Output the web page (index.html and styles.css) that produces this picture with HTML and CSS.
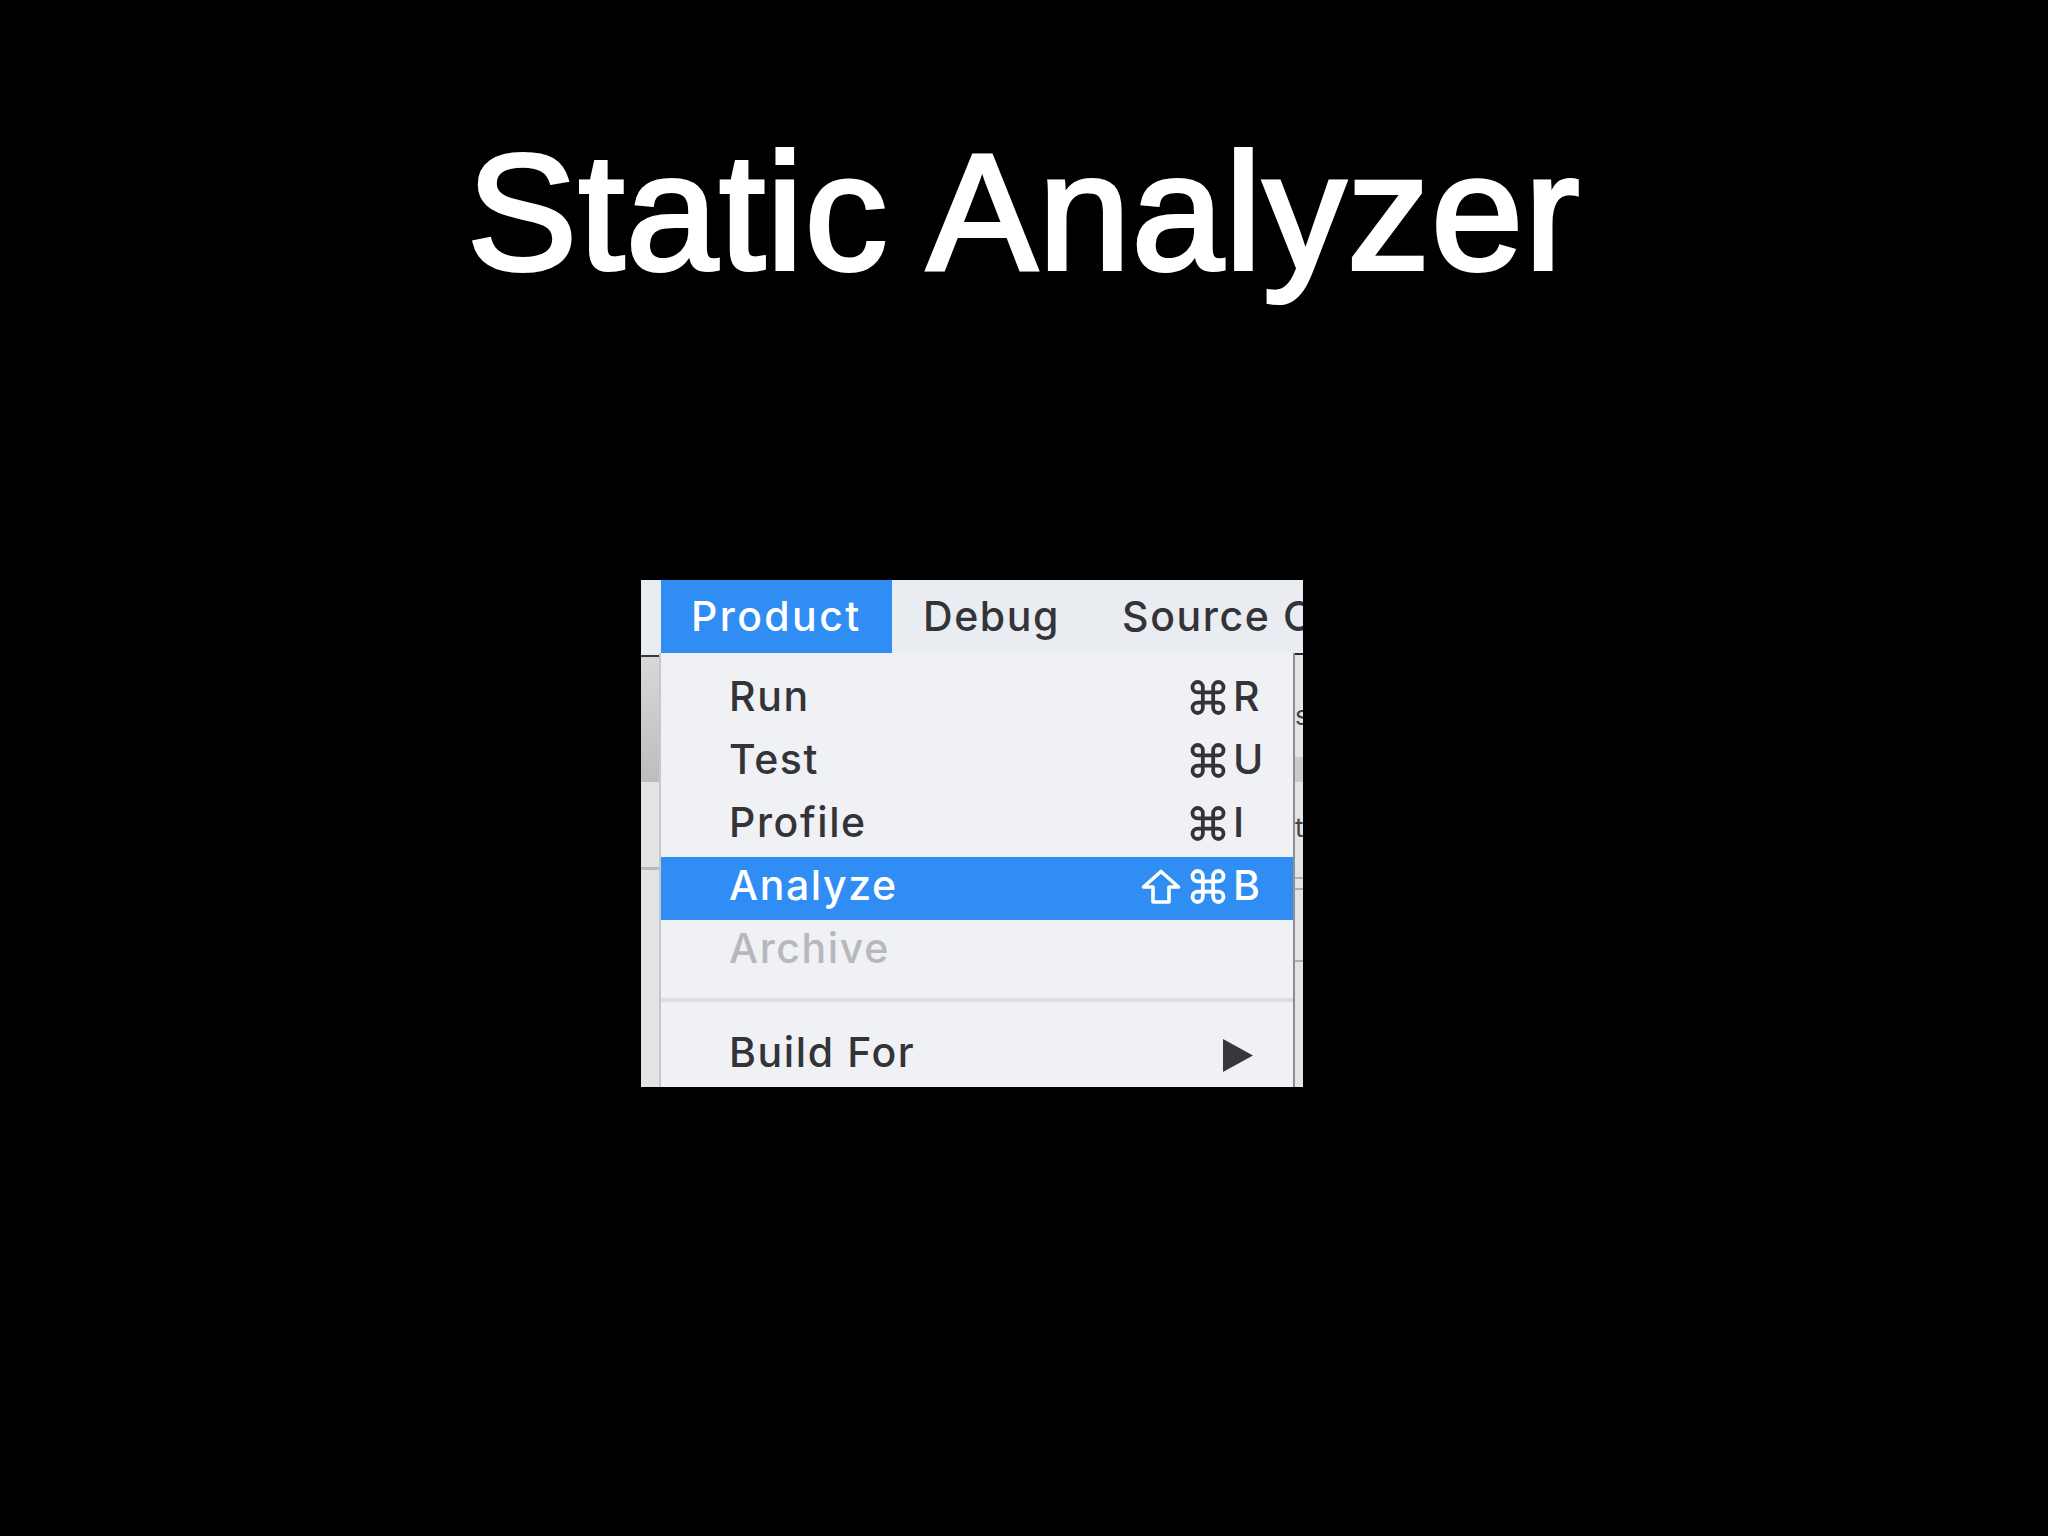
FILE: index.html
```html
<!DOCTYPE html>
<html lang="en">
<head>
<meta charset="utf-8">
<title>Static Analyzer</title>
<link rel="stylesheet" href="styles.css">
</head>
<body>
<div class="slide">
  <h1 class="title">Static Analyzer</h1>
  <div class="shot">
    <div class="menubar">
      <div class="bar-item active">Product</div>
      <div class="bar-item">Debug</div>
      <div class="bar-item">Source Control</div>
    </div>
    <div class="below">
      <div class="win-left"></div>
      <div class="dropdown">
        <div class="row">
          <span class="label">Run</span>
          <span class="mods"><svg class="cmd" viewBox="3 3 18 18"><path d="M15 6v12a3 3 0 1 0 3-3H6a3 3 0 1 0 3 3V6a3 3 0 1 0-3 3h12a3 3 0 1 0-3-3"/></svg></span>
          <span class="key">R</span>
        </div>
        <div class="row">
          <span class="label">Test</span>
          <span class="mods"><svg class="cmd" viewBox="3 3 18 18"><path d="M15 6v12a3 3 0 1 0 3-3H6a3 3 0 1 0 3 3V6a3 3 0 1 0-3 3h12a3 3 0 1 0-3-3"/></svg></span>
          <span class="key">U</span>
        </div>
        <div class="row">
          <span class="label">Profile</span>
          <span class="mods"><svg class="cmd" viewBox="3 3 18 18"><path d="M15 6v12a3 3 0 1 0 3-3H6a3 3 0 1 0 3 3V6a3 3 0 1 0-3 3h12a3 3 0 1 0-3-3"/></svg></span>
          <span class="key">I</span>
        </div>
        <div class="row selected">
          <span class="label">Analyze</span>
          <span class="mods"><svg class="shift" viewBox="0 0 40 35"><path d="M20 2.5 L37.5 18 H28 V33 H12 V18 H2.5 Z"/></svg><svg class="cmd" viewBox="3 3 18 18"><path d="M15 6v12a3 3 0 1 0 3-3H6a3 3 0 1 0 3 3V6a3 3 0 1 0-3 3h12a3 3 0 1 0-3-3"/></svg></span>
          <span class="key">B</span>
        </div>
        <div class="row disabled">
          <span class="label">Archive</span>
        </div>
        <div class="separator"></div>
        <div class="row">
          <span class="label">Build For</span>
          <svg class="submenu" viewBox="0 0 30 33"><path d="M0 0 L30 16.5 L0 33 Z"/></svg>
        </div>
      </div>
      <div class="win-right">
        <span class="frag frag-s">s</span>
        <span class="frag frag-t">t</span>
      </div>
    </div>
  </div>
</div>
</body>
</html>
```

FILE: styles.css
```css
html, body {
  margin: 0;
  padding: 0;
  background: #000;
}

.slide {
  width: 2048px;
  height: 1536px;
  background: #000;
  overflow: hidden;
}

.title {
  margin: 130px 0 0 0;
  font-family: "Liberation Sans", Arial, sans-serif;
  font-weight: 400;
  font-size: 165px;
  line-height: 165px;
  letter-spacing: 1.5px;
  color: #fff;
  text-align: center;
  -webkit-text-stroke: 4px #fff;
}

.shot {
  margin: 285px 0 0 641px;
  width: 662px;
  height: 507px;
  overflow: hidden;
  display: flex;
  flex-direction: column;
  background: #eceff2;
  font-family: Inter, "Noto Sans", sans-serif;
  font-size: 41px;
  font-weight: 500;
  letter-spacing: 1.6px;
  color: #333338;
}

.menubar {
  height: 73px;
  flex: none;
  display: flex;
  padding-left: 20px;
  background: #e9edf1;
  white-space: nowrap;
}

.bar-item {
  padding: 0 31px;
  line-height: 73px;
  flex: none;
}

.bar-item.active {
  background: #2f8df4;
  color: #fff;
  width: 231px;
  box-sizing: border-box;
  padding: 0 0 0 30px;
  letter-spacing: 2.4px;
}

.below {
  flex: 1;
  display: flex;
}

.win-left {
  width: 20px;
  flex: none;
  background:
    linear-gradient(to bottom, transparent 0, transparent 2px, #3a3a3a 2px, #3a3a3a 4px, transparent 4px),
    linear-gradient(to bottom, transparent 0, transparent 214px, #b9b9bb 214px, #b9b9bb 217px, transparent 217px),
    linear-gradient(to bottom, #e9edf1 0, #e9edf1 2px, #d8d8da 4px, #bdbdbf 129px, #e2e3e5 129px, #e2e3e5 100%);
  border-right: 2px solid #c6c7c9;
  box-sizing: border-box;
}

.dropdown {
  width: 632px;
  flex: none;
  background: #eff1f4;
  padding-top: 15px;
  box-sizing: border-box;
}

.row {
  height: 63px;
  display: flex;
  align-items: center;
  padding-left: 68px;
  line-height: 63px;
  position: relative;
}

.row .label {
  flex: 1;
  position: relative;
  top: -3px;
}

.mods {
  display: flex;
  align-items: center;
  justify-content: flex-end;
  gap: 8px;
  width: 90px;
  flex: none;
}

.key {
  width: 66px;
  flex: none;
  padding-left: 6px;
  box-sizing: border-box;
  position: relative;
  top: -3px;
}

.cmd {
  width: 38px;
  height: 31px;
  fill: none;
  stroke: #333338;
  stroke-width: 2.2px;
  stroke-linecap: round;
  stroke-linejoin: round;
  position: relative;
  top: -2px;
  overflow: visible;
}

.shift {
  width: 40px;
  height: 35px;
  fill: none;
  stroke: #fff;
  stroke-width: 3.6px;
  stroke-linejoin: round;
  position: relative;
  top: -2px;
}

.row.selected {
  background: #2f8df4;
  color: #fff;
}

.row.selected .cmd {
  stroke: #fff;
}

.row.disabled {
  color: #b7b8bc;
}

.separator {
  height: 4px;
  margin: 15px 0 22px 0;
  background: #dcdde0;
}

.submenu {
  width: 30px;
  height: 33px;
  margin-right: 40px;
  fill: #38383c;
  flex: none;
}

.win-right {
  width: 10px;
  flex: none;
  position: relative;
  overflow: hidden;
  box-sizing: border-box;
  border-left: 2px solid #8e8f92;
  background:
    linear-gradient(to bottom, transparent 0, transparent 104px, #c9cacc 104px, #c9cacc 129px, transparent 129px),
    linear-gradient(to bottom, transparent 0, transparent 224px, #b0b1b3 224px, #b0b1b3 226px, transparent 226px),
    linear-gradient(to bottom, transparent 0, transparent 235px, #b0b1b3 235px, #b0b1b3 237px, transparent 237px),
    linear-gradient(to bottom, transparent 0, transparent 307px, #b0b1b3 307px, #b0b1b3 309px, transparent 309px),
    linear-gradient(to bottom, #2a2a2a 0, #2a2a2a 2px, #e3e4e6 2px, #e3e4e6 100%);
}

.frag {
  position: absolute;
  left: 0;
  font-size: 26px;
  line-height: 26px;
  color: #444;
  font-weight: 400;
}

.frag-s {
  top: 50px;
}

.frag-t {
  top: 162px;
}
```
